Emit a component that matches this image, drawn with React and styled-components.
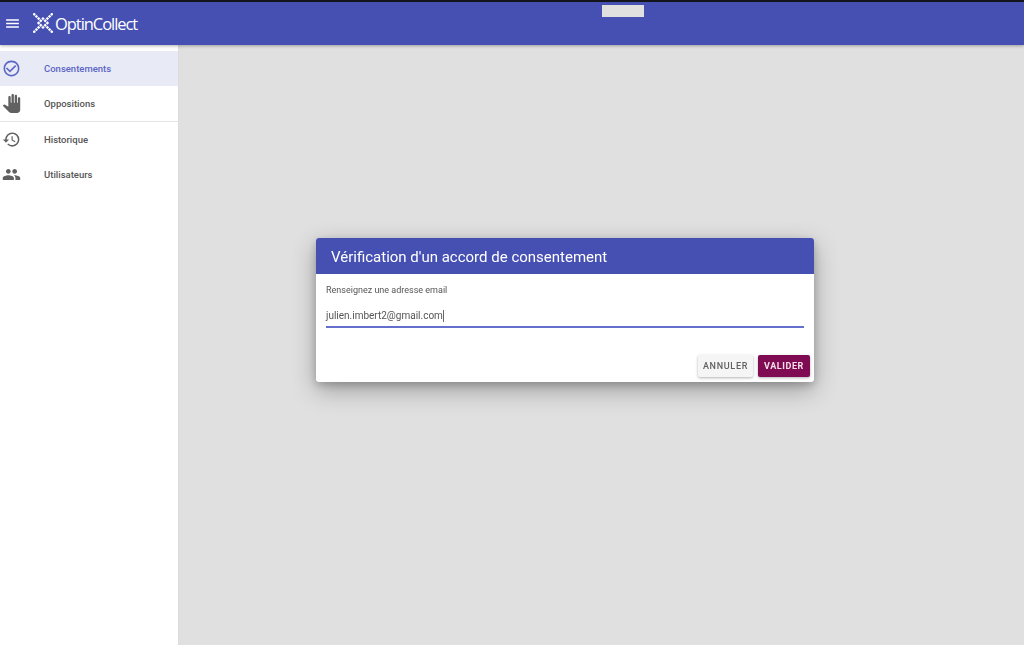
import React from "react";
import styled, { createGlobalStyle } from "styled-components";
import { MdMenu, MdCheckCircleOutline, MdPanTool, MdHistory, MdPeople } from "react-icons/md";

const GlobalStyle = createGlobalStyle`
  html, body {
    margin: 0;
    padding: 0;
    height: 100%;
    overflow: hidden;
    background: #e0e0e0;
    font-family: Roboto, "Liberation Sans", sans-serif;
  }
  #root {
    height: 100%;
  }
`;

const menuItems = [
  { label: "Consentements", icon: <MdCheckCircleOutline />, active: true },
  { label: "Oppositions", icon: <MdPanTool />, divider: true },
  { label: "Historique", icon: <MdHistory /> },
  { label: "Utilisateurs", icon: <MdPeople /> },
];

// the X shaped logo: diagonals of small diamonds, with a smaller cross inside
const logoDots = [];
[1, 2, 3, 4].forEach((i) => {
  logoDots.push([i, i], [-i, i], [i, -i], [-i, -i]);
});
[[-2, 0], [2, 0], [0, -2], [0, 2]].forEach((d) => logoDots.push(d));

const Logo = () => (
  <LogoMark viewBox="-10 -10 20 20">
    {logoDots.map(([x, y], i) => (
      <rect
        key={i}
        x={x * 2.2 - 1.2}
        y={y * 2.2 - 1.2}
        width="2.4"
        height="2.4"
        transform={`rotate(45 ${x * 2.2} ${y * 2.2})`}
        fill="#fff"
      />
    ))}
  </LogoMark>
);

export default function App() {
  return (
    <Page>
      <GlobalStyle />
      <Header>
        <MenuButton>
          <MdMenu />
        </MenuButton>
        <Logo />
        <Brand>OptinCollect</Brand>
        <HeaderPlaceholder />
      </Header>
      <Body>
        <Sidebar>
          {menuItems.map((item) => (
            <MenuItem key={item.label} $active={item.active} $divider={item.divider}>
              <MenuIcon $active={item.active}>{item.icon}</MenuIcon>
              <MenuLabel $active={item.active}>{item.label}</MenuLabel>
            </MenuItem>
          ))}
        </Sidebar>
        <Main />
      </Body>
      <Overlay>
        <Dialog>
          <DialogTitle>Vérification d'un accord de consentement</DialogTitle>
          <DialogContent>
            <FieldLabel>Renseignez une adresse email</FieldLabel>
            <FieldValue>
              julien.imbert2@gmail.com
              <Caret />
            </FieldValue>
          </DialogContent>
          <DialogActions>
            <CancelButton>Annuler</CancelButton>
            <SubmitButton>Valider</SubmitButton>
          </DialogActions>
        </Dialog>
      </Overlay>
    </Page>
  );
}

const Page = styled.div`
  display: flex;
  flex-direction: column;
  height: 645px;
`;

const Header = styled.header`
  position: relative;
  z-index: 2;
  display: flex;
  align-items: center;
  flex: none;
  height: 42.5px;
  padding-left: 3.5px;
  background: #4650b3;
  border-top: 2px solid #14141c;
  box-shadow: 0 1px 3px rgba(0, 0, 0, 0.3);
`;

const MenuButton = styled.div`
  display: flex;
  font-size: 17px;
  color: #fff;
  margin-right: 12.5px;
`;

const LogoMark = styled.svg`
  width: 20px;
  height: 20px;
  flex: none;
`;

const Brand = styled.div`
  margin-left: 2px;
  font-family: "Open Sans", Roboto, sans-serif;
  font-size: 16.5px;
  letter-spacing: -1.05px;
  color: #fff;
`;

const HeaderPlaceholder = styled.div`
  position: absolute;
  top: 3px;
  left: 602px;
  width: 42px;
  height: 12px;
  background: #e0e0e0;
`;

const Body = styled.div`
  display: flex;
  flex: 1;
  min-height: 0;
`;

const Sidebar = styled.nav`
  flex: none;
  width: 179px;
  padding-top: 6px;
  box-sizing: border-box;
  background: #fff;
  border-right: 1px solid #dcdcdc;
`;

const MenuItem = styled.div`
  display: flex;
  align-items: center;
  height: 35.5px;
  background: ${(p) => (p.$active ? "#e8eaf6" : "transparent")};
  border-bottom: ${(p) => (p.$divider ? "1px solid #e4e4e4" : "none")};
  box-sizing: border-box;
`;

const MenuIcon = styled.div`
  display: flex;
  justify-content: center;
  width: 23px;
  font-size: 19px;
  margin-right: 21px;
  color: ${(p) => (p.$active ? "#5c66c4" : "#616161")};
`;

const MenuLabel = styled.div`
  font-size: 9.5px;
  font-weight: 500;
  color: ${(p) => (p.$active ? "#5c66c4" : "#555")};
`;

const Main = styled.main`
  flex: 1;
  background: #e0e0e0;
`;

const Overlay = styled.div`
  position: fixed;
  inset: 0;
  z-index: 3;
  display: flex;
  align-items: center;
  justify-content: center;
  padding: 0 0 25px 106px;
`;

const Dialog = styled.div`
  width: 498px;
  background: #fff;
  border-radius: 3px;
  overflow: hidden;
  box-shadow: 0 8px 24px rgba(0, 0, 0, 0.3), 0 3px 8px rgba(0, 0, 0, 0.2);
`;

const DialogTitle = styled.div`
  display: flex;
  align-items: center;
  height: 34px;
  padding: 2px 0 0 15px;
  background: #4650b3;
  color: #fff;
  font-size: 15px;
  font-weight: 400;
`;

const DialogContent = styled.div`
  padding: 11px 10px 0;
`;

const FieldLabel = styled.div`
  font-size: 9px;
  line-height: 11px;
  color: #555;
`;

const FieldValue = styled.div`
  display: flex;
  align-items: center;
  height: 21px;
  margin-top: 9px;
  font-size: 10px;
  color: #555;
  border-bottom: 2px solid #6570cc;
`;

const Caret = styled.span`
  width: 1px;
  height: 12px;
  background: #666;
`;

const DialogActions = styled.div`
  display: flex;
  justify-content: flex-end;
  gap: 5px;
  padding: 27px 4px 5px;
`;

const CancelButton = styled.button`
  width: 55px;
  height: 22px;
  padding: 0;
  border: none;
  border-radius: 2px;
  background: #f5f5f5;
  color: #616161;
  font-family: inherit;
  font-size: 9px;
  font-weight: 500;
  letter-spacing: 0.7px;
  text-transform: uppercase;
  box-shadow: 0 1px 3px rgba(0, 0, 0, 0.3);
`;

const SubmitButton = styled(CancelButton)`
  width: 52px;
  background: #7f0c52;
  color: #f2dfea;
  font-weight: 700;
  letter-spacing: 0.6px;
`;
